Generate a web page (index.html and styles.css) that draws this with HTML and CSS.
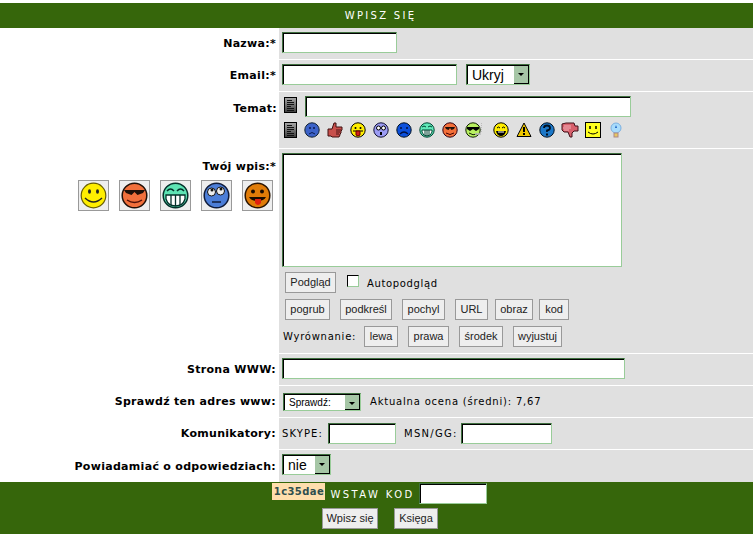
FILE: index.html
```html
<!DOCTYPE html>
<html lang="pl">
  <head>
    <meta charset="UTF-8" />
    <title>Wpisz się</title>
    <link rel="stylesheet" href="styles.css">
  </head>
  <body>
    <svg class="defs" width="0" height="0">
      <defs>
        <linearGradient id="doc-fill" x1="0" y1="0" x2="0" y2="1">
          <stop offset="0" stop-color="#a8a8a8"/>
          <stop offset="1" stop-color="#3c3c3c"/>
        </linearGradient>
        <symbol id="i-doc" viewBox="0 0 13 16">
          <rect x="0.5" y="0.5" width="12" height="15" fill="url(#doc-fill)" stroke="#000"/>
          <path d="M3 3.500h5M3 5.500h7M3 7.500h7M3 9.500h4M3 11.500h7M3 13.500h7" stroke="#111" fill="none"/>
        </symbol>
        <symbol id="i-sad" viewBox="0 0 16 16">
          <circle cx="8" cy="8" r="7.2" fill="#3c62c8" stroke="#123"/>
          <path d="M5 6h2M9 6h2" stroke="#0a1a50" stroke-width="1.5"/>
          <path d="M5 12q3-3 6 0" stroke="#0a1a50" fill="none"/>
        </symbol>
        <symbol id="i-thumb" viewBox="0 0 16 16">
          <path d="M1 7h4l2-6h2l0 4h6v3l-1 1v2l-1 1v1l-1 2H5l-1-1H1z" fill="#c8504c" stroke="#401010"/>
          <path d="M9 8h5M9 10h4M9 12h3" stroke="#501515"/>
        </symbol>
        <symbol id="i-tongue" viewBox="0 0 16 16">
          <circle cx="8" cy="8" r="7.2" fill="#ffee00" stroke="#000"/>
          <circle cx="5.5" cy="6" r="1" fill="#000"/>
          <circle cx="10.5" cy="6" r="1" fill="#000"/>
          <path d="M3 9h10" stroke="#000"/>
          <path d="M6 9h4v4q-2 2-4 0z" fill="#d02020" stroke="#600"/>
        </symbol>
        <symbol id="i-shock" viewBox="0 0 16 16">
          <circle cx="8" cy="8" r="7.2" fill="#9c9cf4" stroke="#113"/>
          <circle cx="5.5" cy="6" r="2" fill="#fff" stroke="#000"/>
          <circle cx="10.5" cy="6" r="2" fill="#fff" stroke="#000"/>
          <rect x="7" y="10" width="2" height="3" fill="#000"/>
        </symbol>
        <symbol id="i-frown" viewBox="0 0 16 16">
          <circle cx="8" cy="8" r="7.2" fill="#0c50dc" stroke="#012"/>
          <path d="M5 5v2M11 5v2" stroke="#001040" stroke-width="1.5"/>
          <path d="M4 12q4-4 8 0" stroke="#001040" fill="none" stroke-width="1.2"/>
        </symbol>
        <symbol id="i-grin" viewBox="0 0 16 16">
          <circle cx="8" cy="8" r="7.2" fill="#5fe8b8" stroke="#043"/>
          <path d="M3 5q2-2 4 0M9 5q2-2 4 0" stroke="#043" fill="none"/>
          <path d="M3 8h10v2q-1 4-5 4t-5-4z" fill="#fff" stroke="#043"/>
          <path d="M6 8v5M8 8v6M10 8v5" stroke="#043"/>
        </symbol>
        <symbol id="i-cool" viewBox="0 0 16 16">
          <circle cx="8" cy="8" r="7.2" fill="#f4703a" stroke="#301"/>
          <path d="M3 5h10l-1 2-2.500 1-1.500-2-1.500 2-2.500-1z" fill="#201008"/>
          <path d="M4 11q4 3 8 0" stroke="#400" fill="none"/>
        </symbol>
        <symbol id="i-smoke" viewBox="0 0 18 16">
          <circle cx="8" cy="8" r="7.2" fill="#b8f060" stroke="#120"/>
          <path d="M2 5h12v2l-3 2-3-2-3 2-3-2z" fill="#000"/>
          <path d="M4 11q4 3 8 1" stroke="#120" fill="none"/>
          <path d="M10 12h6" stroke="#bbb" stroke-width="1.5"/>
          <path d="M16.5 1v9" stroke="#bbb" stroke-dasharray="1 1"/>
        </symbol>
        <symbol id="i-laugh" viewBox="0 0 16 16">
          <circle cx="8" cy="8" r="7.2" fill="#ffee00" stroke="#000"/>
          <path d="M4 6q1.500-2 3 0M9 6q1.500-2 3 0" stroke="#000" fill="none"/>
          <path d="M3 9h10q-1 5-5 5t-5-5z" fill="#000"/>
          <path d="M5 10h6" stroke="#fff"/>
        </symbol>
        <symbol id="i-warn" viewBox="0 0 16 16">
          <path d="M8 1l7 13.500H1z" fill="#f0c800" stroke="#000"/>
          <path d="M8 5v5" stroke="#000" stroke-width="2"/>
          <rect x="7" y="11" width="2" height="2" fill="#000"/>
        </symbol>
        <symbol id="i-help" viewBox="0 0 16 16">
          <circle cx="8" cy="8" r="7.2" fill="#1c78c8" stroke="#012"/>
          <path d="M5 6q0-2.500 3-2.500t3 2.500q0 2-3 2.500v1.500" stroke="#012" stroke-width="1.800" fill="none"/>
          <rect x="7" y="11.500" width="2" height="2" fill="#012"/>
        </symbol>
        <symbol id="i-down" viewBox="0 0 18 16">
          <path d="M1 2l4-1h8l1 3h3v5h-4l-2 2v4H9l-2-5H3L1 8z" fill="#d8606c" stroke="#401018"/>
          <path d="M3 4h7M2 6h8M3 8h5" stroke="#f0b0b8"/>
        </symbol>
        <symbol id="i-square" viewBox="0 0 16 16">
          <rect x="0.500" y="0.500" width="15" height="15" fill="#ffff20" stroke="#000"/>
          <path d="M5 4v3M11 4v3" stroke="#000" stroke-width="1.500"/>
          <path d="M3 10q5 4 10 0" stroke="#000" fill="none"/>
        </symbol>
        <symbol id="i-bulb" viewBox="0 0 16 16">
          <circle cx="8" cy="6" r="5" fill="#a8dcfc" stroke="#7cb0e0"/>
          <path d="M8 3l1 3h-2z" fill="#1c60c0"/>
          <rect x="6" y="11" width="4" height="4" fill="#e8c860" stroke="#a88"/>
        </symbol>
        <symbol id="b-smile" viewBox="0 0 27 27">
          <circle cx="13.500" cy="13.500" r="12.300" fill="#ffee00" stroke="#665c00" stroke-width="1.200"/>
          <ellipse cx="9.500" cy="9.500" rx="1.500" ry="2.200" fill="#222"/>
          <ellipse cx="17.500" cy="9.500" rx="1.500" ry="2.200" fill="#222"/>
          <path d="M5 16q8.500 8 17 0" stroke="#222" stroke-width="1.500" fill="none"/>
        </symbol>
        <symbol id="b-cool" viewBox="0 0 27 27">
          <circle cx="13.500" cy="13.500" r="12.300" fill="#f2703c" stroke="#201008" stroke-width="1.500"/>
          <path d="M3 8h21l-2 3-5.500 2-3-3-3 3-5.500-2z" fill="#201008"/>
          <path d="M6 18q7.500 5 15 0" stroke="#501008" stroke-width="1.500" fill="none"/>
        </symbol>
        <symbol id="b-grin" viewBox="0 0 27 27">
          <circle cx="13.500" cy="13.500" r="12.300" fill="#5ee4b4" stroke="#04302a" stroke-width="1.500"/>
          <path d="M5 9q3.500-4 7 0M15 9q3.500-4 7 0" stroke="#04302a" stroke-width="1.500" fill="none"/>
          <path d="M4 13h19v4q-2 7-9.500 7T4 17z" fill="#fff" stroke="#04302a" stroke-width="1.300"/>
          <path d="M9 13v10M13.500 13v11M18 13v10" stroke="#04302a" stroke-width="1.300"/>
        </symbol>
        <symbol id="b-roll" viewBox="0 0 27 27">
          <circle cx="13.500" cy="13.500" r="12.300" fill="#4c7ed8" stroke="#101c3a" stroke-width="1.500"/>
          <circle cx="8.500" cy="10" r="4" fill="#eee" stroke="#111"/>
          <circle cx="17.500" cy="9" r="4" fill="#eee" stroke="#111"/>
          <circle cx="9" cy="8" r="1.500" fill="#111"/>
          <circle cx="18" cy="7" r="1.500" fill="#111"/>
          <path d="M9 20h9" stroke="#101c3a" stroke-width="1.500"/>
        </symbol>
        <symbol id="b-tongue" viewBox="0 0 27 27">
          <circle cx="13.500" cy="13.500" r="12.300" fill="#e07c08" stroke="#2a1400" stroke-width="1.500"/>
          <circle cx="9" cy="9.500" r="2" fill="#1a0c00"/>
          <circle cx="18" cy="9.500" r="2" fill="#1a0c00"/>
          <path d="M5 15h17q-2 4-8.500 4T5 15z" fill="#1a0c00"/>
          <path d="M11 17h6v4q-3 4-6 0z" fill="#e02010"/>
        </symbol>
      </defs>
    </svg>

    <div class="titlebar">WPISZ SIĘ</div>

    <div class="row row-name">
      <div class="label">Nazwa:*</div>
      <div class="field"><span class="input w-name"></span></div>
    </div>

    <div class="row row-email">
      <div class="label">Email:*</div>
      <div class="field">
        <span class="input w-email"></span>
        <span class="select w-hide"><span class="select-text">Ukryj</span><span class="select-arrow"></span></span>
      </div>
    </div>

    <div class="row row-topic">
      <div class="label label-topic">Temat:</div>
      <div class="field field-topic">
        <div class="topic-line">
          <svg class="icon-doc"><use href="#i-doc"/></svg>
          <span class="input w-topic"></span>
        </div>
        <div class="icons">
          <svg class="icon-doc"><use href="#i-doc"/></svg>
          <svg class="icon"><use href="#i-sad"/></svg>
          <svg class="icon"><use href="#i-thumb"/></svg>
          <svg class="icon"><use href="#i-tongue"/></svg>
          <svg class="icon"><use href="#i-shock"/></svg>
          <svg class="icon"><use href="#i-frown"/></svg>
          <svg class="icon"><use href="#i-grin"/></svg>
          <svg class="icon"><use href="#i-cool"/></svg>
          <svg class="icon icon-wide"><use href="#i-smoke"/></svg>
          <svg class="icon"><use href="#i-laugh"/></svg>
          <svg class="icon"><use href="#i-warn"/></svg>
          <svg class="icon"><use href="#i-help"/></svg>
          <svg class="icon icon-down"><use href="#i-down"/></svg>
          <svg class="icon"><use href="#i-square"/></svg>
          <svg class="icon"><use href="#i-bulb"/></svg>
        </div>
      </div>
    </div>

    <div class="row row-post">
      <div class="label label-post">
        <div class="post-title">Twój wpis:*</div>
        <div class="smileys">
          <span class="smiley"><svg><use href="#b-smile"/></svg></span>
          <span class="smiley"><svg><use href="#b-cool"/></svg></span>
          <span class="smiley"><svg><use href="#b-grin"/></svg></span>
          <span class="smiley"><svg><use href="#b-roll"/></svg></span>
          <span class="smiley"><svg><use href="#b-tongue"/></svg></span>
        </div>
      </div>
      <div class="field field-post">
        <span class="input w-post"></span>
        <div class="tools tools-preview">
          <span class="btn w-preview">Podgląd</span>
          <span class="check"></span>
          <span class="check-label">Autopodgląd</span>
        </div>
        <div class="tools">
          <span class="btn btn-bold">pogrub</span>
          <span class="btn btn-under">podkreśl</span>
          <span class="btn btn-italic">pochyl</span>
          <span class="btn btn-url">URL</span>
          <span class="btn btn-img">obraz</span>
          <span class="btn btn-code">kod</span>
        </div>
        <div class="tools tools-align">
          <span class="align-label">Wyrównanie:</span>
          <span class="btn btn-left">lewa</span>
          <span class="btn btn-right">prawa</span>
          <span class="btn btn-center">środek</span>
          <span class="btn btn-just">wyjustuj</span>
        </div>
      </div>
    </div>

    <div class="row row-www">
      <div class="label">Strona WWW:</div>
      <div class="field"><span class="input w-www"></span></div>
    </div>

    <div class="row row-check">
      <div class="label">Sprawdź ten adres www:</div>
      <div class="field">
        <span class="select select-small w-check"><span class="select-text">Sprawdź:</span><span class="select-arrow"></span></span>
        <span class="rating">Aktualna ocena (średni): 7,67</span>
      </div>
    </div>

    <div class="row row-im">
      <div class="label">Komunikatory:</div>
      <div class="field">
        <span class="im-label">SKYPE:</span>
        <span class="input w-skype"></span>
        <span class="im-label im-msn">MSN/GG:</span>
        <span class="input w-msn"></span>
      </div>
    </div>

    <div class="row row-notify">
      <div class="label">Powiadamiać o odpowiedziach:</div>
      <div class="field">
        <span class="select w-notify"><span class="select-text">nie</span><span class="select-arrow"></span></span>
      </div>
    </div>

    <div class="footer">
      <div class="code-line">
        <span class="code">1c35dae</span>
        <span class="code-label">WSTAW KOD</span>
        <span class="input w-code"></span>
      </div>
      <div class="footer-buttons">
        <span class="btn btn-send">Wpisz się</span>
        <span class="btn btn-book">Księga</span>
      </div>
    </div>
  </body>
</html>
```

FILE: styles.css
```css
* {
  box-sizing: border-box;
  margin: 0;
  padding: 0;
}

body {
  font-family: "DejaVu Sans", Verdana, sans-serif;
  font-size: 10px;
  color: #000;
  background-color: #fff;
  padding-top: 3px;
  overflow: hidden;
}

.defs {
  position: absolute;
}

.titlebar {
  height: 25px;
  line-height: 25px;
  background-color: #36660b;
  color: #fff;
  text-align: center;
  font-size: 10px;
  letter-spacing: 2.3px;
  padding-left: 8px;
}

.row {
  display: grid;
  grid-template-columns: 279px 1fr;
  margin-bottom: 1px;
}

.label {
  font-weight: bold;
  font-size: 11px;
  letter-spacing: 0.3px;
  text-align: right;
  padding-right: 3px;
  display: flex;
  align-items: center;
  justify-content: flex-end;
  white-space: nowrap;
}

.field {
  background-color: #e0e0e0;
  display: flex;
  align-items: center;
  padding-left: 3px;
}

.row-name { height: 31px; }
.row-email { height: 31px; }
.row-topic { height: 56px; }
.row-post { height: 204px; }
.row-www { height: 31px; }
.row-check { height: 31px; }
.row-im { height: 31px; }
.row-notify { height: 32px; margin-bottom: 0; }

.row-name .field { padding-bottom: 3px; }
.row-email .field { padding-bottom: 2px; }
.row-www .field { padding-bottom: 3px; }
.row-notify .field { padding-bottom: 3px; }

.input {
  display: block;
  flex: none;
  height: 21px;
  background-color: #fff;
  border: 1px solid #9c9;
  border-top-color: #3f6f3f;
  border-left-color: #3f6f3f;
  box-shadow: inset 1px 1px 0 #000;
}

.w-name { width: 115px; }
.w-email { width: 175px; }
.w-topic { width: 326px; margin-left: 8px; }
.w-post { width: 340px; height: 114px; }
.w-www { width: 343px; }
.w-skype { width: 68px; margin-left: 5px; }
.w-msn { width: 91px; margin-left: 3px; }
.w-code { width: 68px; margin-left: 4px; }

.select {
  display: flex;
  flex: none;
  height: 21px;
  background-color: #fff;
  border: 1px solid #9c9;
  border-top-color: #3f6f3f;
  border-left-color: #3f6f3f;
  box-shadow: inset 1px 1px 0 #000;
  font-family: "Liberation Sans", Arial, sans-serif;
  font-size: 14px;
  align-items: center;
  justify-content: space-between;
  padding: 1px 0 0 1px;
}

.select-text {
  padding-left: 4px;
}

.select-arrow {
  width: 15px;
  height: 18px;
  background-color: #a6c6a6;
  border-right: 1px solid #000;
  border-bottom: 1px solid #000;
  position: relative;
}

.select-arrow::after {
  content: "";
  position: absolute;
  left: 4px;
  top: 7px;
  border-style: solid;
  border-width: 3px 3px 0 3px;
  border-color: #000 transparent transparent transparent;
}

.select-small {
  font-size: 10px;
  height: 18px;
}

.select-small .select-arrow {
  height: 15px;
}

.select-small .select-text {
  padding-left: 4px;
}

.w-hide { width: 64px; margin-left: 9px; }
.w-check { width: 78px; margin-left: 1px; }
.w-notify { width: 49px; }

.rating {
  margin-left: 9px;
  letter-spacing: 0.8px;
}

.im-label {
  letter-spacing: 1.1px;
}

.im-msn {
  margin-left: 8px;
  letter-spacing: 1.3px;
}

.label-topic {
  align-items: flex-start;
  padding-top: 10px;
  padding-right: 2px;
}

.field-topic {
  flex-direction: column;
  align-items: flex-start;
  padding-top: 4px;
  padding-left: 5px;
}

.topic-line {
  display: flex;
  align-items: flex-start;
}

.icon-doc {
  width: 13px;
  height: 16px;
  margin-top: 1px;
  flex: none;
}

.icons {
  display: flex;
  gap: 7px;
  margin-top: 5px;
  align-items: flex-start;
}

.icons .icon-doc {
  margin-top: 0;
}

.icon {
  width: 16px;
  height: 16px;
  flex: none;
}

.icon-wide {
  width: 18px;
  margin-right: 3px;
}

.icon-down {
  width: 18px;
  margin: 0 -1px;
}

.label-post {
  flex-direction: column;
  align-items: flex-end;
  justify-content: flex-start;
  padding-top: 11px;
}

.post-title {
  height: 20px;
}

.smileys {
  display: flex;
  gap: 10px;
  margin-top: 0;
  padding-right: 3px;
}

.smiley {
  width: 31px;
  height: 31px;
  background-color: #eee;
  border: 1px solid #999;
  padding: 1px;
  display: block;
}

.smiley svg {
  display: block;
  width: 27px;
  height: 27px;
}

.field-post {
  flex-direction: column;
  align-items: flex-start;
  padding-top: 4px;
}

.tools {
  display: flex;
  align-items: center;
  margin-top: 6px;
  padding-left: 3px;
  height: 21px;
}

.tools-preview {
  margin-top: 5px;
}

.tools-align {
  padding-left: 1px;
}

.btn {
  display: block;
  flex: none;
  height: 21px;
  line-height: 19px;
  background-color: #eee;
  border: 1px solid #999;
  text-align: center;
  font-family: "Liberation Sans", Arial, sans-serif;
  font-size: 11px;
  color: #222;
}

.w-preview { width: 51px; }

.check {
  width: 12px;
  height: 12px;
  margin-left: 11px;
  margin-top: -4px;
  background-color: #fff;
  border: 1px solid #9c9;
  border-top-color: #000;
  border-left-color: #000;
}

.check-label {
  margin-left: 8px;
  margin-top: 1px;
  letter-spacing: 0.65px;
}

.btn-bold { width: 45px; }
.btn-under { width: 52px; margin-left: 10px; }
.btn-italic { width: 43px; margin-left: 10px; }
.btn-url { width: 33px; margin-left: 10px; }
.btn-img { width: 38px; margin-left: 7px; }
.btn-code { width: 30px; margin-left: 6px; }

.align-label {
  width: 81px;
  letter-spacing: 0.75px;
  white-space: nowrap;
}

.btn-left { width: 34px; }
.btn-right { width: 41px; margin-left: 10px; }
.btn-center { width: 44px; margin-left: 10px; }
.btn-just { width: 49px; margin-left: 10px; }

.footer {
  height: 52px;
  background-color: #36660b;
  padding-top: 1px;
}

.code-line {
  display: flex;
  align-items: flex-start;
  justify-content: center;
  padding-left: 6px;
}

.code {
  width: 53px;
  height: 17px;
  line-height: 17px;
  text-align: center;
  background-color: #ffdead;
  color: #2f4f4f;
  font-weight: bold;
  font-size: 10px;
  letter-spacing: 0.4px;
}

.code-label {
  color: #fff;
  letter-spacing: 2.4px;
  margin-left: 5px;
  margin-top: 6px;
}

.footer-buttons {
  display: flex;
  justify-content: center;
  gap: 16px;
  margin-top: 4px;
  padding-left: 7px;
}

.btn-send { width: 56px; }
.btn-book { width: 44px; }
```
